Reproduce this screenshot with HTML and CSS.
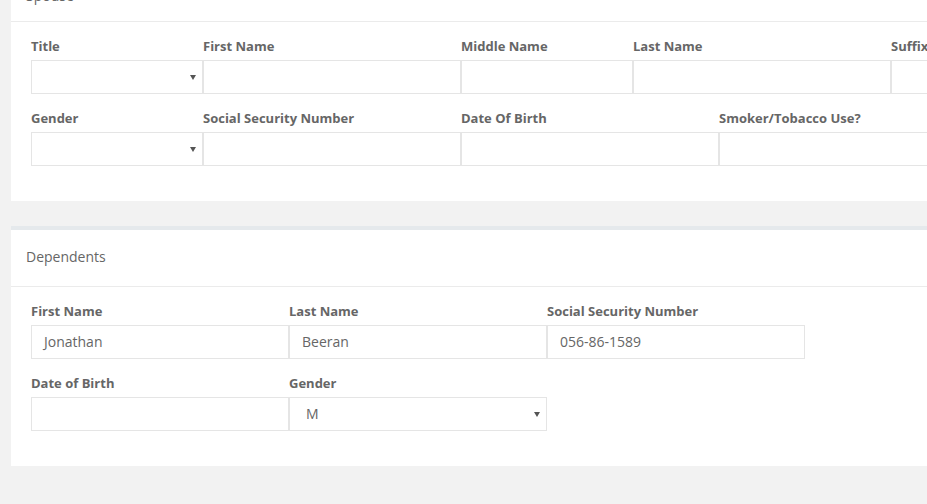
FILE: index.html
```html
<!DOCTYPE html>
<html>
<head>
<meta charset="utf-8">
<link rel="stylesheet" href="styles.css">
</head>
<body>
<div class="page">
  <section class="panel">
    <div class="panel-heading panel-heading-spouse">Spouse</div>
    <div class="panel-body">
      <div class="grid">
        <div class="field span-2"><label>Title</label><div class="select"><span class="val"></span><span class="caret"></span></div></div>
        <div class="field span-3"><label>First Name</label><div class="input"></div></div>
        <div class="field span-2"><label>Middle Name</label><div class="input"></div></div>
        <div class="field span-3"><label>Last Name</label><div class="input"></div></div>
        <div class="field span-2"><label>Suffix</label><div class="input"></div></div>
      </div>
      <div class="grid">
        <div class="field span-2"><label>Gender</label><div class="select"><span class="val"></span><span class="caret"></span></div></div>
        <div class="field span-3"><label>Social Security Number</label><div class="input"></div></div>
        <div class="field span-3"><label>Date Of Birth</label><div class="input"></div></div>
        <div class="field span-3"><label>Smoker/Tobacco Use?</label><div class="input"></div></div>
      </div>
    </div>
  </section>

  <section class="panel">
    <div class="panel-heading">Dependents</div>
    <div class="panel-body">
      <div class="grid">
        <div class="field span-3"><label>First Name</label><div class="input">Jonathan</div></div>
        <div class="field span-3"><label>Last Name</label><div class="input">Beeran</div></div>
        <div class="field span-3"><label>Social Security Number</label><div class="input">056-86-1589</div></div>
      </div>
      <div class="grid">
        <div class="field span-3"><label>Date of Birth</label><div class="input"></div></div>
        <div class="field span-3"><label>Gender</label><div class="select"><span class="val">M</span><span class="caret"></span></div></div>
      </div>
    </div>
  </section>
</div>
</body>
</html>
```
FILE: styles.css
```css
html, body {
  margin: 0;
  padding: 0;
  background: #f2f2f2;
  overflow: hidden;
}
body {
  font-family: "Open Sans", "Noto Sans", sans-serif;
  color: #666;
}
.page {
  margin-top: -39px;
  padding-left: 11px;
  width: 1072px;
}
.panel {
  background: #fff;
  border-top: 4px solid #e5e9ec;
  margin-bottom: 25px;
}
.panel-heading {
  padding: 17px 15px 19px;
  font-size: 14px;
  line-height: 20px;
  color: #666;
  border-bottom: 1px solid #ebebeb;
}
.panel-heading-spouse {
  padding-top: 21px;
  padding-bottom: 15px;
}
.panel-body {
  padding: 15px 20px 20px;
}
.grid {
  display: grid;
  grid-template-columns: repeat(12, 86px);
}
.field {
  margin-bottom: 15px;
}
.span-2 { grid-column: span 2; }
.span-3 { grid-column: span 3; }
.field label {
  display: block;
  font-size: 13px;
  font-weight: 700;
  line-height: 18px;
  color: #666;
  margin-bottom: 5px;
  white-space: nowrap;
}
.input, .select {
  box-sizing: border-box;
  height: 34px;
  border: 1px solid #e5e5e5;
  font-size: 14px;
  line-height: 32px;
  color: #666;
  padding: 0 12px;
}
.select {
  display: flex;
  justify-content: space-between;
  align-items: center;
  padding: 0 6px 0 16px;
}
.caret {
  width: 0;
  height: 0;
  border-left: 3px solid transparent;
  border-right: 3px solid transparent;
  border-top: 5px solid #555;
}
```
